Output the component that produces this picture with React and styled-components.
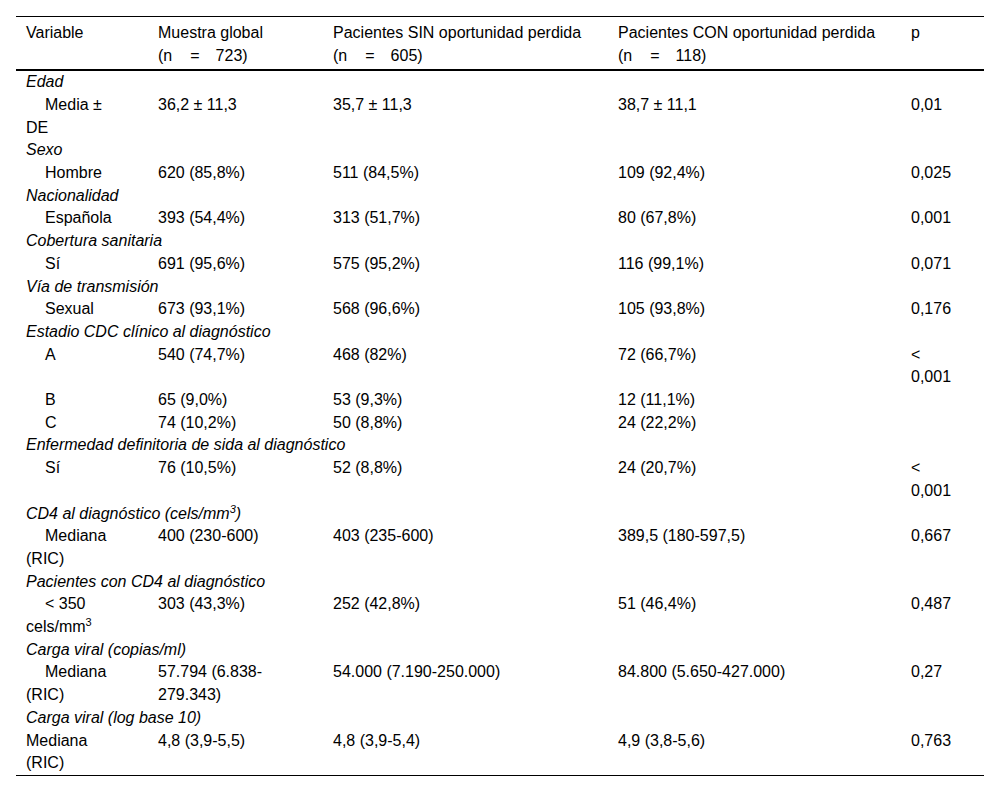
import React from "react";
import styled, { createGlobalStyle } from "styled-components";

const GlobalStyle = createGlobalStyle`
  body {
    margin: 0;
    background: #fff;
    color: #000;
    font-family: "Liberation Sans", Arial, sans-serif;
  }
`;

const Page = styled.div`
  padding: 16px;
`;

const Table = styled.table`
  width: 968px;
  border-collapse: collapse;
  table-layout: fixed;
  font-size: 16px;
  color: #000;
  border-top: 1px solid #000;
  border-bottom: 1px solid #000;

  sup {
    font-size: 11px;
    line-height: 0;
  }
`;

const HeadRow = styled.tr`
  border-bottom: 2px solid #000;
`;

const HeadCell = styled.th`
  text-align: left;
  font-weight: normal;
  vertical-align: top;
  line-height: 22.6px;
  padding: 5px 24px 2px 10px;
`;

// wide gap round the "=" in "(n = 723)"
const Eq = styled.span`
  margin: 0 16px 0 18px;
`;

const Cell = styled.td`
  vertical-align: top;
  line-height: 22.7px;
  padding: 0 24px 0 10px;
  font-style: ${(p) => (p.$italic ? "italic" : "normal")};
  text-indent: ${(p) => (p.$indent ? "19px" : "0")};
`;

const widths = [132, 175, 285, 293, 83];

const groups = [
  {
    title: "Edad",
    rows: [{ label: "Media ± DE", v: ["36,2 ± 11,3", "35,7 ± 11,3", "38,7 ± 11,1"], p: "0,01" }],
  },
  {
    title: "Sexo",
    rows: [{ label: "Hombre", v: ["620 (85,8%)", "511 (84,5%)", "109 (92,4%)"], p: "0,025" }],
  },
  {
    title: "Nacionalidad",
    rows: [{ label: "Española", v: ["393 (54,4%)", "313 (51,7%)", "80 (67,8%)"], p: "0,001" }],
  },
  {
    title: "Cobertura sanitaria",
    rows: [{ label: "Sí", v: ["691 (95,6%)", "575 (95,2%)", "116 (99,1%)"], p: "0,071" }],
  },
  {
    title: "Vía de transmisión",
    rows: [{ label: "Sexual", v: ["673 (93,1%)", "568 (96,6%)", "105 (93,8%)"], p: "0,176" }],
  },
  {
    title: "Estadio CDC clínico al diagnóstico",
    rows: [
      { label: "A", v: ["540 (74,7%)", "468 (82%)", "72 (66,7%)"], p: "< 0,001" },
      { label: "B", v: ["65 (9,0%)", "53 (9,3%)", "12 (11,1%)"], p: "" },
      { label: "C", v: ["74 (10,2%)", "50 (8,8%)", "24 (22,2%)"], p: "" },
    ],
  },
  {
    title: "Enfermedad definitoria de sida al diagnóstico",
    rows: [{ label: "Sí", v: ["76 (10,5%)", "52 (8,8%)", "24 (20,7%)"], p: "< 0,001" }],
  },
  {
    title: (
      <>
        CD4 al diagnóstico (cels/mm<sup>3</sup>)
      </>
    ),
    rows: [
      { label: "Mediana (RIC)", v: ["400 (230-600)", "403 (235-600)", "389,5 (180-597,5)"], p: "0,667" },
    ],
  },
  {
    title: "Pacientes con CD4 al diagnóstico",
    rows: [
      {
        label: (
          <>
            &lt; 350 cels/mm<sup>3</sup>
          </>
        ),
        v: ["303 (43,3%)", "252 (42,8%)", "51 (46,4%)"],
        p: "0,487",
      },
    ],
  },
  {
    title: "Carga viral (copias/ml)",
    rows: [
      {
        label: "Mediana (RIC)",
        v: [
          <>
            57.794 (6.838-<wbr />279.343)
          </>,
          "54.000 (7.190-250.000)",
          "84.800 (5.650-427.000)",
        ],
        p: "0,27",
      },
    ],
  },
  {
    title: "Carga viral (log base 10)",
    flat: true,
    rows: [{ label: "Mediana (RIC)", v: ["4,8 (3,9-5,5)", "4,8 (3,9-5,4)", "4,9 (3,8-5,6)"], p: "0,763" }],
  },
];

export default function App() {
  return (
    <Page>
      <GlobalStyle />
      <Table>
        <colgroup>
          {widths.map((w, i) => (
            <col key={i} style={{ width: w }} />
          ))}
        </colgroup>
        <thead>
          <HeadRow>
            <HeadCell>Variable</HeadCell>
            <HeadCell>
              Muestra global
              <br />
              (n<Eq>=</Eq>723)
            </HeadCell>
            <HeadCell>
              Pacientes SIN oportunidad perdida
              <br />
              (n<Eq>=</Eq>605)
            </HeadCell>
            <HeadCell>
              Pacientes CON oportunidad perdida
              <br />
              (n<Eq>=</Eq>118)
            </HeadCell>
            <HeadCell>p</HeadCell>
          </HeadRow>
        </thead>
        <tbody>
          {groups.map((g, gi) => (
            <React.Fragment key={gi}>
              <tr>
                <Cell colSpan={5} $italic>
                  {g.title}
                </Cell>
              </tr>
              {g.rows.map((r, ri) => (
                <tr key={ri}>
                  <Cell $indent={!g.flat}>{r.label}</Cell>
                  {r.v.map((val, vi) => (
                    <Cell key={vi}>{val}</Cell>
                  ))}
                  <Cell>{r.p}</Cell>
                </tr>
              ))}
            </React.Fragment>
          ))}
        </tbody>
      </Table>
    </Page>
  );
}
